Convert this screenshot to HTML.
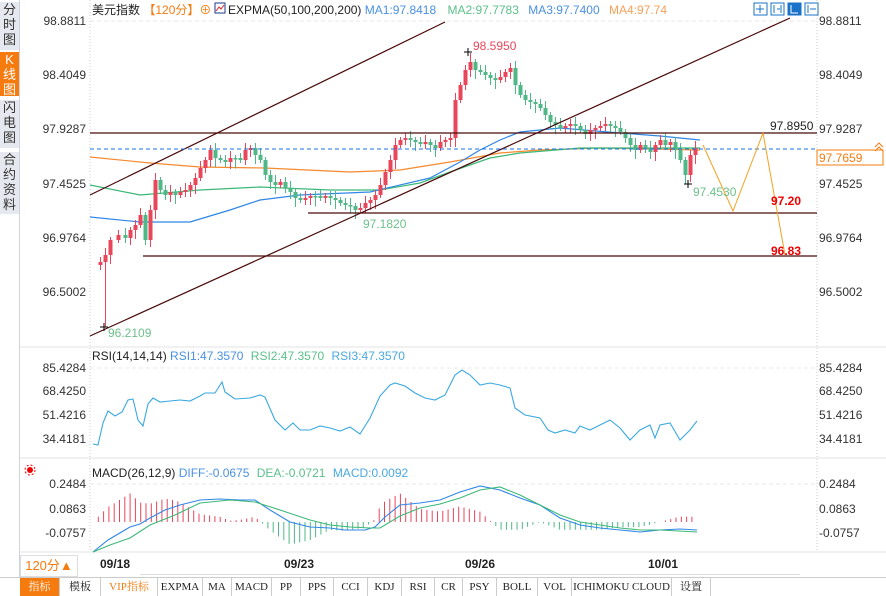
<!DOCTYPE html>
<html><head><meta charset="utf-8"><style>
body{margin:0;width:886px;height:595px;overflow:hidden;background:#fff;font-family:"Liberation Sans","Noto Sans CJK SC",sans-serif;position:relative}
.sb{position:absolute;left:0;top:0;width:19px;height:578px;border-right:1px solid #d0d3dc;background:#fff}
.sb div{position:absolute;left:0;width:19px;background:#e6e8ef;color:#333;font-size:13px;line-height:15px;text-align:center;border-bottom:1px solid #fff}
.tabs{position:absolute;left:0;top:577px;width:886px;height:18px;border-top:1px solid #ccc;background:#fff;font-family:"Liberation Serif","Noto Serif CJK SC",serif;font-size:11px}
.tabs span{position:absolute;top:0;height:18px;line-height:18px;text-align:center;border-right:1px solid #ccc;color:#222}
</style></head><body>
<div class="sb">
<div style="top:2px;height:48px">分<br>时<br>图</div>
<div style="top:52px;height:44px;background:#f57b0e;color:#fff">K<br>线<br>图</div>
<div style="top:100px;height:48px">闪<br>电<br>图</div>
<div style="top:152px;height:62px">合<br>约<br>资<br>料</div>
</div>
<svg id="s" width="886" height="578" style="position:absolute;left:0;top:0" font-family="Liberation Sans, Noto Sans CJK SC, sans-serif">
<g stroke="#e3e3e3"><line x1="20" y1="347" x2="886" y2="347"/><line x1="20" y1="458" x2="886" y2="458"/><line x1="20" y1="552" x2="886" y2="552"/></g>
<line x1="90" y1="0" x2="90" y2="552" stroke="#ccc" stroke-dasharray="1,2"/>
<line x1="817" y1="0" x2="817" y2="552" stroke="#ccc" stroke-dasharray="1,2"/>
<g stroke="#e8e8e8" stroke-dasharray="4,3"><line x1="90" y1="21" x2="817" y2="21"/><line x1="90" y1="368" x2="817" y2="368"/><line x1="90" y1="484" x2="817" y2="484"/></g>
<g font-size="12" fill="#333" text-anchor="end">
<text x="86" y="25">98.8811</text><text x="86" y="79">98.4049</text><text x="86" y="133">97.9287</text><text x="86" y="188">97.4525</text><text x="86" y="242">96.9764</text><text x="86" y="296">96.5002</text>
<text x="86" y="372">85.4284</text><text x="86" y="395">68.4250</text><text x="86" y="419">51.4216</text><text x="86" y="443">34.4181</text>
<text x="86" y="488">0.2484</text><text x="86" y="513">0.0863</text><text x="86" y="537">-0.0757</text>
</g>
<g font-size="12" fill="#333">
<text x="819" y="25">98.8811</text><text x="819" y="79">98.4049</text><text x="819" y="133">97.9287</text><text x="819" y="188">97.4525</text><text x="819" y="242">96.9764</text><text x="819" y="296">96.5002</text>
<text x="819" y="372">85.4284</text><text x="819" y="395">68.4250</text><text x="819" y="419">51.4216</text><text x="819" y="443">34.4181</text>
<text x="819" y="488">0.2484</text><text x="819" y="513">0.0863</text><text x="819" y="537">-0.0757</text>
</g>
<rect x="817" y="150" width="66" height="15" fill="#fff" stroke="#f57b0e"/>
<text x="819" y="162" font-size="12" fill="#f57b0e">97.7659</text>
<path d="M875 147l4-4 4 4M875 151l4-4 4 4" stroke="#f57b0e" fill="none"/>
<g fill="#fff" stroke="#1a73c8"><rect x="754" y="3" width="13" height="12"/><rect x="771" y="3" width="13" height="12"/><rect x="788" y="3" width="13" height="12" fill="#1a73c8"/><rect x="805" y="3" width="13" height="12"/></g>
<path d="M760 5v8M756 9h8M774 5v8M781 5v8M777 9h3M791 5v8l7-4z M808 5v8M810 9h6" stroke="#1a73c8" fill="none"/>
<path d="M791 5v8h7" stroke="#fff" fill="none"/>
<g font-size="12">
<text x="92" y="14" fill="#222">美元指数 <tspan fill="#f57b0e">【120分】⊕</tspan></text>
<rect x="215" y="3" width="10" height="10" fill="#fff" stroke="#1a3a8a"/><path d="M216 11l3-4 2 2 3-4" stroke="#d22" fill="none"/>
<text x="228" y="14" fill="#222">EXPMA(50,100,200,200) <tspan fill="#4a90e2">MA1:97.8418</tspan>  <tspan fill="#5cc08a" dx="8">MA2:97.7783</tspan> <tspan fill="#4a90e2" dx="6">MA3:97.7400</tspan> <tspan fill="#f5a05a" dx="6">MA4:97.74</tspan></text>
<text x="92" y="360" fill="#222">RSI(14,14,14) <tspan fill="#4a90e2">RSI1:47.3570</tspan> <tspan fill="#5cc08a" dx="4">RSI2:47.3570</tspan> <tspan fill="#4aa8e0" dx="4">RSI3:47.3570</tspan></text>
<text x="92" y="477" fill="#222">MACD(26,12,9) <tspan fill="#4a90e2">DIFF:-0.0675</tspan> <tspan fill="#5cc08a" dx="4">DEA:-0.0721</tspan> <tspan fill="#4aa8e0" dx="4">MACD:0.0092</tspan></text>
</g>
<circle cx="30" cy="470" r="3" fill="#e00"/><circle cx="30" cy="470" r="5" fill="none" stroke="#e00" stroke-dasharray="2,2"/>
<polyline fill="none" stroke="#f5892f" stroke-width="1.2" points="90,157 150,163 200,167 265,168 350,172 400,170 450,162 500,153 540,150 600,148 700,150"/>
<polyline fill="none" stroke="#3cb878" stroke-width="1.2" points="90,185 140,195 200,190 260,187 330,190 380,190 420,183 450,172 490,158 520,153 580,148 700,148"/>
<polyline fill="none" stroke="#2f86e8" stroke-width="1.2" points="90,217 140,222 190,222 230,210 260,200 300,195 370,192 430,178 460,162 480,150 500,140 520,132 560,128 620,133 660,136 700,140"/>
<g id="cd"></g>
<g stroke="#4a0a0a" stroke-width="1.2"><line x1="90" y1="195" x2="445" y2="22"/><line x1="90" y1="336" x2="790" y2="18"/>
<line x1="90" y1="133" x2="817" y2="133"/><line x1="308" y1="213" x2="817" y2="213"/><line x1="143" y1="256" x2="817" y2="256"/></g>
<line x1="90" y1="149" x2="817" y2="149" stroke="#1a73e8" stroke-dasharray="4,3"/>
<polyline fill="none" stroke="#f5a020" points="703,145 733,211 763,133 785,255"/>
<g font-size="12">
<text x="770" y="130" fill="#222">97.8950</text><text x="771" y="205" fill="#e00" font-weight="bold">97.20</text><text x="771" y="255" fill="#e00" font-weight="bold">96.83</text>
<text x="473" y="50" fill="#e8465a">98.5950</text><text x="363" y="228" fill="#6cc08a">97.1820</text><text x="108" y="337" fill="#6cc08a">96.2109</text><text x="693" y="196" fill="#6cc08a">97.4530</text>
</g>
<path d="M100 327h8M104 323v8M464 52h8M468 48v8M684 184h8M688 180v8" stroke="#000"/>
<polyline fill="none" stroke="#3aa8e0" stroke-width="1.1" points="93,444 98,445 103,423 108,411 115,416 122,412 128,400 133,399 138,420 143,426 148,404 153,398 160,402 170,401 180,400 190,401 200,396 205,393 215,393 222,382 225,392 235,399 250,398 260,395 265,397 275,420 285,430 293,423 300,430 310,430 320,426 330,428 340,431 350,427 360,434 370,418 380,396 390,385 395,383 405,386 415,393 425,398 435,400 445,395 455,375 462,370 470,375 480,385 490,383 500,385 510,388 515,408 525,415 540,418 548,430 555,433 565,430 575,433 580,426 590,430 600,425 610,420 620,428 630,440 640,430 650,425 655,438 660,425 670,423 680,440 690,430 697,421"/>
<g id="hist"></g>
<polyline id="diff" fill="none" stroke="#2f86e8" stroke-width="1.1" points="93,552 108,540 130,527 140,524 150,518 165,510 180,505 200,500 220,499 240,500 255,500 270,510 290,522 310,527 330,528 345,530 365,530 375,527 385,517 400,505 420,503 440,500 460,492 480,486 500,490 520,498 540,505 560,518 580,525 600,528 620,530 640,532 660,530 680,529 697,530"/>
<polyline id="dea" fill="none" stroke="#3cb878" stroke-width="1.1" points="93,552 110,545 130,538 150,525 175,515 200,503 230,500 255,502 280,510 310,520 330,525 350,527 370,528 380,528 400,516 420,508 440,504 460,498 480,490 500,487 520,495 540,505 560,515 580,522 600,525 620,528 640,530 660,530 697,532"/>
</svg>
<div style="position:absolute;left:20px;top:555px;width:56px;height:20px;border:1px solid #ddd;color:#f57b0e;font-size:13px;line-height:20px;text-align:center">120分▲</div>
<div style="position:absolute;left:86px;top:555px;width:720px;font-size:12px;font-weight:bold;color:#222">
<span style="position:absolute;left:14px;top:2px">09/18</span><span style="position:absolute;left:198px;top:2px">09/23</span><span style="position:absolute;left:379px;top:2px">09/26</span><span style="position:absolute;left:562px;top:2px">10/01</span></div>
<div style="position:absolute;left:140px;top:574px;width:660px;border-top:1px solid #ddd"></div>
<div class="tabs">
<span style="left:20px;width:39px;background:#f57b0e;color:#fff">指标</span>
<span style="left:60px;width:40px">模板</span>
<span style="left:101px;width:56px;color:#f57b0e">VIP指标</span>
<span style="left:158px;width:44px">EXPMA</span>
<span style="left:203px;width:28px">MA</span>
<span style="left:232px;width:39px">MACD</span>
<span style="left:272px;width:28px">PP</span>
<span style="left:301px;width:32px">PPS</span>
<span style="left:334px;width:33px">CCI</span>
<span style="left:368px;width:33px">KDJ</span>
<span style="left:402px;width:32px">RSI</span>
<span style="left:435px;width:27px">CR</span>
<span style="left:463px;width:33px">PSY</span>
<span style="left:497px;width:40px">BOLL</span>
<span style="left:538px;width:33px">VOL</span>
<span style="left:572px;width:99px">ICHIMOKU CLOUD</span>
<span style="left:672px;width:38px">设置</span>
</div>
<script>
var P=[[93,265],[100,262],[105,255],[110,240],[118,235],[125,238],[130,230],[135,225],[140,215],[145,240],[150,210],[155,180],[160,190],[165,195],[170,192],[175,195],[180,192],[185,190],[190,185],[195,178],[200,168],[205,160],[210,150],[215,158],[220,160],[225,162],[230,158],[235,158],[240,160],[245,150],[250,148],[255,155],[260,160],[265,175],[270,182],[275,185],[280,182],[285,188],[290,192],[295,198],[300,200],[305,198],[310,196],[315,196],[320,198],[325,196],[330,198],[335,200],[340,203],[345,205],[350,206],[355,210],[360,208],[365,203],[370,200],[375,195],[380,185],[385,172],[390,160],[395,145],[400,140],[405,138],[410,140],[415,142],[420,144],[425,142],[430,145],[435,148],[440,142],[445,140],[450,138],[455,100],[460,85],[465,70],[470,62],[475,70],[480,72],[485,75],[490,78],[495,80],[500,77],[505,72],[510,68],[515,85],[520,95],[525,100],[530,102],[535,104],[540,108],[545,115],[550,122],[555,125],[560,128],[565,126],[570,124],[575,126],[580,130],[585,134],[590,130],[595,128],[600,126],[605,124],[610,126],[615,128],[620,132],[625,138],[630,145],[635,150],[640,145],[645,148],[650,152],[655,145],[660,140],[665,145],[670,142],[675,150],[680,160],[685,175],[690,155],[695,148]];
var g=document.getElementById('cd'),h="";
for(var i=1;i<P.length;i++){var o=P[i-1][1],c=P[i][1],x=P[i][0],up=c<o,col=up?"#e8465a":"#4fb886";
var t=Math.min(o,c),b=Math.max(o,c);if(b-t<1.5){b=t+1.5}
var hi=t-3-(i%3)*2,lo=b+3+(i%4)*2;
if(x==105)lo=327; if(x==470)hi=53; if(x==685)lo=184;
h+='<line x1="'+(x+.5)+'" y1="'+hi+'" x2="'+(x+.5)+'" y2="'+lo+'" stroke="'+col+'"/><rect x="'+(x-1.5)+'" y="'+t+'" width="4" height="'+(b-t)+'" fill="'+col+'"/>';}
g.innerHTML=h;
function pts(id){return document.getElementById(id).getAttribute('points').trim().split(/\s+/).map(function(s){return s.split(',').map(Number)})}
function at(a,x){for(var i=1;i<a.length;i++)if(a[i][0]>=x){var p=a[i-1],q=a[i],t=(x-p[0])/(q[0]-p[0]);return p[1]+t*(q[1]-p[1])}return a[a.length-1][1]}
var D=pts('diff'),E=pts('dea'),hh="";
for(var x=93;x<=697;x+=5.3){var d=(at(E,x)-at(D,x))*2.6,base=522;
hh+='<line x1="'+x+'" y1="'+base+'" x2="'+x+'" y2="'+(base-d)+'" stroke="'+(d>0?"#e8465a":"#4fb886")+'"/>';}
document.getElementById('hist').innerHTML=hh;
</script>
</body></html>
